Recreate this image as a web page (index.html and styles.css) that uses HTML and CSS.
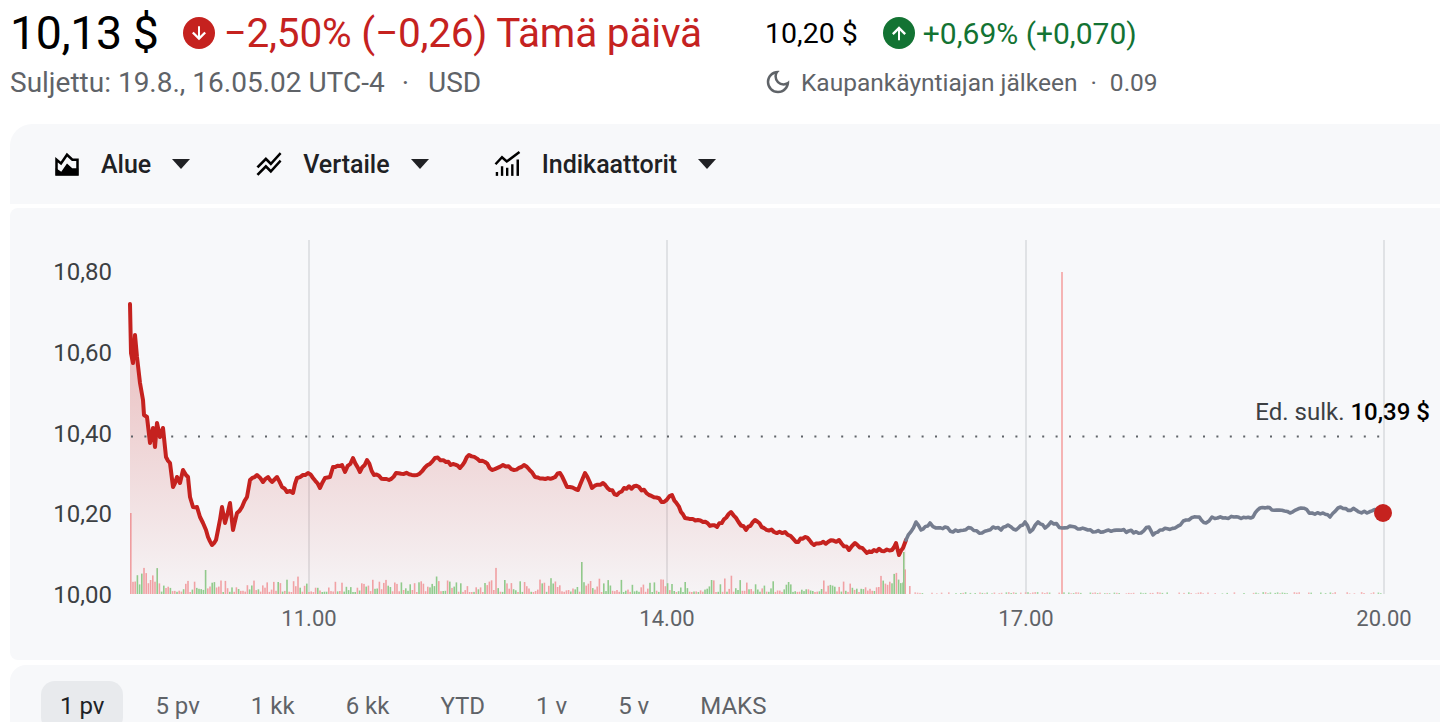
FILE: index.html
```html
<!DOCTYPE html>
<html lang="fi">
<head>
<meta charset="utf-8">
<title>Kurssi</title>
<link rel="stylesheet" href="styles.css">
</head>
<body>
<header class="quote">
  <div class="quote-main">
    <div class="row1">
      <span class="price">10,13 $</span>
      <span class="badge badge-down">
        <svg viewBox="0 0 24 24" class="badge-arrow"><path d="M10.8 4v11.6l-5.2-5.2L3.6 12.4l8.4 8.4 8.4-8.4-2-2-5.2 5.2V4Z"/></svg>
      </span>
      <span class="change-down">−2,50% (−0,26) Tämä päivä</span>
    </div>
    <div class="row2 sub">
      <span>Suljettu: 19.8., 16.05.02 UTC-4</span>
      <span class="sep">·</span>
      <span>USD</span>
    </div>
  </div>
  <div class="quote-after">
    <div class="row1">
      <span class="price-after">10,20 $</span>
      <span class="badge badge-up">
        <svg viewBox="0 0 24 24" class="badge-arrow"><path d="M10.8 20.8V9.2l-5.2 5.2-2-2L12 4l8.4 8.4-2 2-5.2-5.2v11.6Z"/></svg>
      </span>
      <span class="change-up">+0,69% (+0,070)</span>
    </div>
    <div class="row2 sub-after">
      <svg viewBox="0 0 24 24" class="moon"><path d="M12 21q-3.75 0-6.375-2.625T3 12q0-3.750 2.625-6.375T12 3q.35 0 .688.025.337.025.662.075-1.025.725-1.637 1.887Q11.1 6.15 11.1 7.5q0 2.25 1.575 3.825Q14.25 12.9 16.5 12.9q1.375 0 2.525-.613 1.15-.612 1.875-1.637.05.325.075.662Q21 11.65 21 12q0 3.75-2.625 6.375T12 21Zm0-2q2.2 0 3.950-1.212 1.75-1.213 2.55-3.163-.5.125-1 .2-.5.075-1 .075-3.075 0-5.238-2.162Q9.1 10.575 9.1 7.5q0-.5.075-1t.2-1q-1.950.8-3.163 2.550Q5 9.8 5 12q0 2.9 2.050 4.950Q9.1 19 12 19Z"/></svg>
      <span>Kaupankäyntiajan jälkeen</span>
      <span class="sep2">·</span>
      <span>0.09</span>
    </div>
  </div>
</header>

<nav class="toolbar">
  <div class="tool">
    <svg viewBox="0 0 24 24" class="tool-icon">
      <path d="M3.6 20.4V8.6L7.2 11.6L12 4.6L16.3 8.5H20.4V20.4Z" fill="none" stroke="#000" stroke-width="2" stroke-linejoin="miter"/>
      <path d="M3 21V15.2L7.4 18.2L12 11.6L16.2 15.3H21V21Z" fill="#000"/>
    </svg>
    <span class="tool-label">Alue</span>
    <svg viewBox="0 0 18 10" class="caret"><path d="M0 0H18L9 10Z"/></svg>
  </div>
  <div class="tool">
    <svg viewBox="0 0 24 24" class="tool-icon"><path d="M2 19.99l7.5-7.51 4 4 7.09-7.97L22 9.92l-8.5 9.56-4-4-6 6.01-1.5-1.5zm1.5-4.5l6-6.01 4 4L22 3.92l-1.41-1.41-7.09 7.970-4-4L2 13.99l1.5 1.5z"/></svg>
    <span class="tool-label">Vertaile</span>
    <svg viewBox="0 0 18 10" class="caret"><path d="M0 0H18L9 10Z"/></svg>
  </div>
  <div class="tool">
    <svg viewBox="0 0 24 24" class="tool-icon">
      <path d="M2 12.2L7.2 6.6L11 10L21.2 2.4" fill="none" stroke="#000" stroke-width="2"/>
      <rect x="2.2" y="18.4" width="1.9" height="3.1"/>
      <rect x="6.3" y="13.8" width="1.9" height="7.7"/>
      <rect x="10.4" y="15" width="1.9" height="6.5"/>
      <rect x="14.5" y="12.2" width="1.9" height="9.3"/>
      <rect x="18.8" y="8.4" width="2" height="13.1"/>
    </svg>
    <span class="tool-label">Indikaattorit</span>
    <svg viewBox="0 0 18 10" class="caret"><path d="M0 0H18L9 10Z"/></svg>
  </div>
</nav>

<section class="chart-panel">
  <svg class="chart" viewBox="10 208 1430 452" width="1430" height="452">
    <defs>
      <linearGradient id="areaGrad" gradientUnits="userSpaceOnUse" x1="0" y1="300" x2="0" y2="594">
        <stop offset="0" stop-color="#c5221f" stop-opacity="0.30"/>
        <stop offset="1" stop-color="#c5221f" stop-opacity="0.02"/>
      </linearGradient>
    </defs>
    <g class="grid">
      <line x1="309" y1="240" x2="309" y2="594"/>
      <line x1="667" y1="240" x2="667" y2="594"/>
      <line x1="1026" y1="240" x2="1026" y2="594"/>
      <line x1="1384" y1="240" x2="1384" y2="594"/>
    </g>
    <line class="marker" x1="1062" y1="272" x2="1062" y2="594"/>
    <g id="vol"></g>
    <path id="area" fill="url(#areaGrad)"/>
    <line class="prevclose" x1="131" y1="436.5" x2="1384" y2="436.5"/>
    <path id="redLine" class="line-red"/>
    <path id="grayLine" class="line-gray"/>
    <circle cx="1383" cy="513" r="9" class="dot"/>
    <g class="ylab">
      <text x="112" y="272">10,80</text>
      <text x="112" y="353">10,60</text>
      <text x="112" y="434">10,40</text>
      <text x="112" y="514">10,20</text>
      <text x="112" y="595">10,00</text>
    </g>
    <g class="xlab">
      <text x="309" y="618">11.00</text>
      <text x="667" y="618">14.00</text>
      <text x="1026" y="618">17.00</text>
      <text x="1384" y="618">20.00</text>
    </g>
    <text class="pc-label" x="1430" y="412"><tspan class="pc-key">Ed. sulk. </tspan><tspan class="pc-val">10,39 $</tspan></text>
  </svg>
</section>

<section class="range-panel">
  <button class="range active">1 pv</button>
  <button class="range">5 pv</button>
  <button class="range">1 kk</button>
  <button class="range">6 kk</button>
  <button class="range">YTD</button>
  <button class="range">1 v</button>
  <button class="range">5 v</button>
  <button class="range">MAKS</button>
</section>

<script src="script.js"></script>
</body>
</html>
```

FILE: styles.css
```css
* { box-sizing: border-box; }
html, body { margin: 0; padding: 0; background: #fff; }
body {
  font-family: Roboto, "Noto Sans", "Liberation Sans", sans-serif;
  color: #202124;
  width: 1440px;
  height: 722px;
  overflow: hidden;
}

.quote {
  display: flex;
  padding: 4px 0 0 10px;
  height: 124px;
}
.quote-main { width: 755px; }
.quote-after { flex: 1; }

.row1 {
  display: flex;
  align-items: center;
  height: 58px;
  white-space: nowrap;
}
.row2 {
  display: flex;
  align-items: center;
  height: 40px;
  white-space: nowrap;
}

.price {
  font-size: 46.5px;
  font-weight: 400;
  color: #000;
  letter-spacing: -0.4px;
}
.badge {
  width: 32px;
  height: 32px;
  border-radius: 50%;
  display: inline-flex;
  align-items: center;
  justify-content: center;
}
.badge-down { background: #c5221f; margin-left: 24px; margin-right: 9px; }
.badge-up { background: #137333; margin-left: 25px; margin-right: 8px; }
.badge-arrow { width: 20px; height: 20px; fill: #fff; }

.change-down {
  font-size: 40.5px;
  color: #c5221f;
  letter-spacing: -0.2px;
}
.sub {
  font-size: 28px;
  color: #5f6368;
}
.sep { margin: 0 19px 0 17px; }

.price-after {
  font-size: 28.5px;
  color: #000;
}
.change-up {
  font-size: 30px;
  color: #137333;
}
.sub-after {
  font-size: 24.5px;
  color: #5f6368;
}
.moon { width: 30px; height: 30px; fill: #5f6368; margin-right: 8px; margin-left: -2px; }
.sep2 { margin: 0 13px 0 13px; }

.toolbar {
  margin-left: 10px;
  height: 80px;
  background: #f7f8fa;
  border-top-left-radius: 22px;
  display: flex;
  align-items: center;
  padding-left: 42px;
  gap: 64px;
}
.tool {
  display: flex;
  align-items: center;
}
.tool-icon { width: 30px; height: 30px; fill: #000; }
.tool-label {
  font-size: 25px;
  font-weight: 500;
  color: #202124;
  margin-left: 19px;
  margin-right: 21px;
}
.caret { width: 18px; height: 10px; fill: #202124; }

.chart-panel {
  margin: 4px 0 0 10px;
  height: 452px;
  background: #f7f8fa;
  border-radius: 8px 0 0 8px;
  overflow: hidden;
}
.chart { display: block; }
.grid line { stroke: #dadce0; stroke-width: 1.6; }
.marker { stroke: #f4a3a3; stroke-width: 1.6; }
.prevclose { stroke: #5f6368; stroke-width: 2; stroke-dasharray: 2 11.4; }
.line-red { fill: none; stroke: #c5221f; stroke-width: 4; stroke-linejoin: round; stroke-linecap: round; }
.line-gray { fill: none; stroke: #757d8f; stroke-width: 3.6; stroke-linejoin: round; stroke-linecap: round; }
.dot { fill: #c5221f; }
.ylab text {
  font-family: Roboto, "Noto Sans", sans-serif;
  font-size: 24px;
  fill: #3c4043;
  text-anchor: end;
  dominant-baseline: central;
}
.xlab text {
  font-family: Roboto, "Noto Sans", sans-serif;
  font-size: 22px;
  fill: #5f6368;
  text-anchor: middle;
  dominant-baseline: central;
}
.pc-label {
  font-family: Roboto, "Noto Sans", sans-serif;
  font-size: 24px;
  text-anchor: end;
  dominant-baseline: central;
}
.pc-key { fill: #3c4043; }
.pc-val { fill: #000; font-weight: 500; }

.range-panel {
  margin: 5px 0 0 10px;
  height: 80px;
  background: #f7f8fa;
  border-top-left-radius: 16px;
  display: flex;
  align-items: flex-start;
  padding: 16px 0 0 31px;
  gap: 13px;
}
.range {
  font-family: Roboto, "Noto Sans", sans-serif;
  font-size: 24px;
  color: #5f6368;
  background: transparent;
  border: 0;
  height: 50px;
  padding: 0 19px 0 19px;
  border-radius: 14px;
  line-height: 50px;
  cursor: pointer;
}
.range.active {
  background: #e8eaed;
  color: #202124;
}
```

FILE: script.js
```js
(function () {
  var NS = 'http://www.w3.org/2000/svg';
  var s = 987654;
  function rnd() { s = (s * 16807) % 2147483647; return s / 2147483647; }

  var red = [
    [130,304],[131,353],[133,363],[135,335],[137,357],[140,383],[143,400],[144,415],[147,417],
    [150,443],[153,428],[155,447],[157,423],[160,437],[163,428],[166,457],[170,463],[173,487],
    [177,477],[180,483],[183,470],[186,475],[188,477],[190,497],[193,507],[197,507],[200,517],
    [203,523],[206,530],[208,537],[212,545],[216,540],[218,530],[222,507],[225,523],[230,503],
    [233,530],[237,513],[242,507],[247,497],[250,480],[257,475],[263,482],[268,477],[272,482],
    [277,477],[282,487],[287,492],[293,493],[297,478],[303,475],[308,473],[313,478],[320,488],
    [325,478],[330,477],[333,467],[342,465],[345,472],[353,458],[360,472],[367,460],[374,475],
    [389,480],[396,473],[417,475],[435,458],[446,462],[460,468],[469,455],[485,462],[492,470],
    [503,465],[514,470],[524,465],[535,477],[553,478],[560,473],[567,487],[578,490],[585,473],
    [592,488],[603,483],[617,495],[624,488],[639,487],[649,495],[664,502],[672,495],[681,512],
    [685,518],[703,522],[717,527],[731,512],[746,530],[755,520],[764,528],[774,532],[785,532],
    [796,542],[805,537],[814,545],[828,542],[839,540],[849,550],[855,543],[867,553],[874,550],
    [892,550],[896,543],[899,555],[903,548],[906,540]
  ];
  var gray = [
    [906,540],[916,522],[921,530],[930,523],[936,528],[945,527],[953,532],[971,528],[982,533],
    [993,527],[1001,530],[1008,525],[1016,530],[1025,522],[1030,532],[1038,522],[1045,528],
    [1051,522],[1062,528],[1075,527],[1093,532],[1119,530],[1141,533],[1149,527],[1153,535],
    [1160,530],[1175,528],[1186,520],[1197,517],[1206,523],[1212,517],[1223,518],[1234,517],
    [1253,517],[1260,508],[1279,510],[1290,513],[1301,508],[1312,513],[1323,513],[1330,517],
    [1338,508],[1356,510],[1367,513],[1377,510],[1383,513]
  ];

  function densify(pts, step, amp) {
    var out = [];
    for (var i = 0; i < pts.length - 1; i++) {
      var x0 = pts[i][0], y0 = pts[i][1], x1 = pts[i + 1][0], y1 = pts[i + 1][1];
      var n = Math.max(1, Math.round((x1 - x0) / step));
      for (var k = 0; k < n; k++) {
        var t = k / n;
        var y = y0 + (y1 - y0) * t;
        if (k > 0) y += (rnd() - 0.5) * amp;
        out.push([x0 + (x1 - x0) * t, y]);
      }
    }
    out.push(pts[pts.length - 1]);
    return out;
  }
  function toD(pts) {
    return 'M' + pts.map(function (p) { return p[0].toFixed(1) + ',' + p[1].toFixed(1); }).join('L');
  }

  var r = densify(red, 2.5, 3);
  var g = densify(gray, 2.5, 3);
  var rd = toD(r);
  document.getElementById('redLine').setAttribute('d', rd);
  document.getElementById('area').setAttribute('d', rd + 'L906,594L130,594Z');
  document.getElementById('grayLine').setAttribute('d', toD(g));

  var vol = document.getElementById('vol');
  function bar(x, h, green, op) {
    var rc = document.createElementNS(NS, 'rect');
    rc.setAttribute('x', x.toFixed(1));
    rc.setAttribute('y', (594 - h).toFixed(1));
    rc.setAttribute('width', '1.6');
    rc.setAttribute('height', h.toFixed(1));
    rc.setAttribute('fill', green ? '#8fcf8f' : '#f2a5a8');
    if (op) rc.setAttribute('opacity', op);
    vol.appendChild(rc);
  }
  bar(130, 81, false);
  for (var x = 132.2; x < 905; x += 2.2) {
    var green = rnd() < 0.45;
    var h = 2 + Math.pow(rnd(), 2.2) * 13;
    if (rnd() < 0.04) h += 6 + rnd() * 12;
    if (x < 160) h += 4 + rnd() * 10;
    if (x > 880) h += (x - 880) * 0.9 * rnd() + 4;
    if (Math.abs(x - 580) < 1.1) { h = 32; green = true; }
    if (Math.abs(x - 205) < 1.1) { h = 24; green = true; }
    bar(x, h, green);
  }
  bar(903, 42, true);
  bar(909, 8, false);
  for (var x2 = 912; x2 < 1384; x2 += 2.4) {
    if (rnd() < 0.55) bar(x2, 0.6 + rnd() * 1.4, rnd() < 0.4, 0.8);
  }
})();
```
